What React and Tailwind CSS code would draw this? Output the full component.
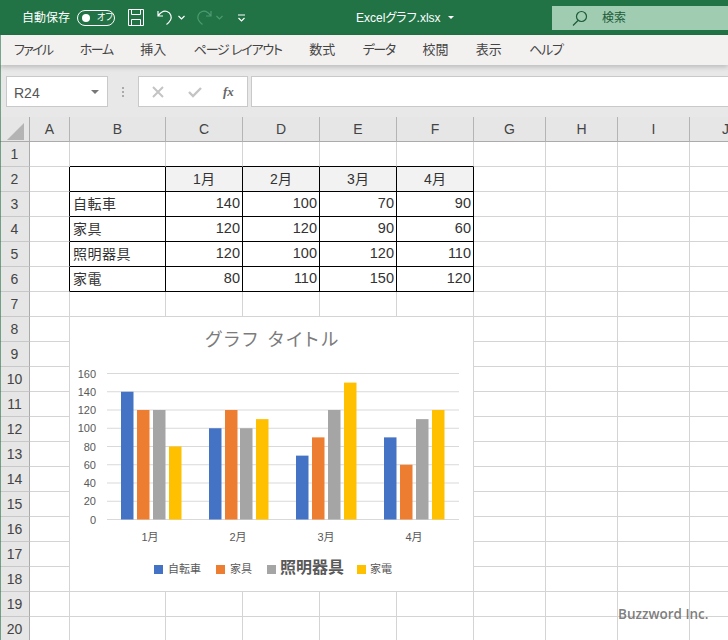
import React from "react";

const jp = "font-['Liberation_Sans','Noto_Sans_CJK_JP',sans-serif] [font-feature-settings:'palt']";

const tabs = [
  { label: "ファイル", tracking: "tracking-[-1.7px]" },
  { label: "ホーム", tracking: "tracking-[-1.3px]" },
  { label: "挿入", tracking: "tracking-normal" },
  { label: "ページ レイアウト", tracking: "tracking-[-1.2px]" },
  { label: "数式", tracking: "tracking-normal" },
  { label: "データ", tracking: "tracking-[-1.3px]" },
  { label: "校閲", tracking: "tracking-normal" },
  { label: "表示", tracking: "tracking-normal" },
  { label: "ヘルプ", tracking: "tracking-[-1.3px]" },
];
const columns = ["A", "B", "C", "D", "E", "F", "G", "H", "I", "J"];
const months = ["1月", "2月", "3月", "4月"];

const tableRows = [
  ["自転車", 140, 100, 70, 90],
  ["家具", 120, 120, 90, 60],
  ["照明器具", 120, 100, 120, 110],
  ["家電", 80, 110, 150, 120],
];

const series = [
  { name: "自転車", color: "#4472c4", xs: [121, 209, 296, 384], values: [140, 100, 70, 90] },
  { name: "家具", color: "#ed7d31", xs: [137, 225, 312, 400], values: [120, 120, 90, 60] },
  { name: "照明器具", color: "#a5a5a5", xs: [153, 240, 328, 416], values: [120, 100, 120, 110] },
  { name: "家電", color: "#ffc000", xs: [169, 256, 344, 432], values: [80, 110, 150, 120] },
];

const TitleBar = () => (
  <div className="h-[35px] bg-[#217346] flex items-center text-white relative">
    <span className={`${jp} ml-[22px] text-[12px]`}>自動保存</span>
    <div className="ml-[7px] w-[38px] h-[16px] rounded-full border border-white flex items-center pl-[4px]">
      <span className="w-[8px] h-[8px] rounded-full bg-white" />
      <span className={`${jp} ml-[7px] text-[9px] leading-none`}>オフ</span>
    </div>
    <svg className="ml-[13px]" width="16" height="17" viewBox="0 0 16 17" fill="none" stroke="#fff" strokeWidth="1">
      <path d="M.5.5h15v16H.5zM3.5.5v5h9v-5M3.5 16.5v-6h9v6" />
    </svg>
    <svg className="ml-[13px]" width="17" height="17" viewBox="0 0 17 17" fill="none" stroke="#fff" strokeWidth="1.2">
      <path d="M1 2v5h5M1.500 6.500C4 3 7 1.500 10 2.500c4 1.500 5 5.500 3.500 8.500-.8 1.500-2 3-4 4.500" />
    </svg>
    <svg className="ml-[4px]" width="7" height="5" viewBox="0 0 7 5" fill="none" stroke="#fff" strokeWidth="1.2">
      <path d="M.5 1l3 3 3-3" />
    </svg>
    <svg className="ml-[10px]" width="17" height="17" viewBox="0 0 17 17" fill="none" stroke="#4d9a70" strokeWidth="1.2">
      <path d="M16 2v5h-5M15.500 6.500C13 3 10 1.500 7 2.500 3 4 2 8 3.500 11c.8 1.500 2 3 4 4.500" />
    </svg>
    <svg className="ml-[4px]" width="7" height="5" viewBox="0 0 7 5" fill="none" stroke="#4d9a70" strokeWidth="1.2">
      <path d="M.5 1l3 3 3-3" />
    </svg>
    <svg className="ml-[14px]" width="9" height="8" viewBox="0 0 9 8" fill="none" stroke="#fff" strokeWidth="1.2">
      <path d="M1 1h7M1.500 4l3 3 3-3" />
    </svg>
    <div className={`${jp} absolute left-[356px] text-[12px] flex items-center`}>
      Excelグラフ.xlsx
      <span className="ml-[7px] w-0 h-0 border-x-[3px] border-x-transparent border-t-[3px] border-t-white" />
    </div>
    <div className="absolute left-[552px] top-[6px] w-[176px] h-[24px] bg-[#a0cdb1] flex items-center pl-[20px]">
      <svg width="16" height="16" viewBox="0 0 16 16" fill="none" stroke="#1d5b3a" strokeWidth="1.2">
        <circle cx="9.500" cy="6.500" r="5" />
        <path d="M6 10.500L1 15.500" />
      </svg>
      <span className={`${jp} ml-[14px] text-[12px] text-[#1d5b3a]`}>検索</span>
    </div>
  </div>
);

const Ribbon = () => (
  <div className={`${jp} relative h-[30px] bg-[#f3f1f0] flex items-center pl-[14px] gap-[27.4px] text-[13px] text-[#444] shadow-[0_2px_5px_rgba(0,0,0,0.2)]`}>
    {tabs.map((tab) => (
      <span key={tab.label} className={tab.tracking}>{tab.label}</span>
    ))}
  </div>
);

const FormulaBar = () => (
  <div className="h-[52px] bg-[#e8e8e8] flex items-start pt-[11px]">
    <div className="ml-[6px] w-[102px] h-[31px] bg-white border border-[#c9c9c9] flex items-center pl-[7px] pr-[8px] justify-between">
      <span className="pt-[4px] font-['Liberation_Sans',sans-serif] text-[14px] text-[#555]">R24</span>
      <span className="w-0 h-0 border-x-[4px] border-x-transparent border-t-[4px] border-t-[#777]" />
    </div>
    <div className="ml-[14px] h-[31px] flex flex-col justify-center gap-[2px]">
      <span className="w-[2px] h-[2px] bg-[#aaa]" />
      <span className="w-[2px] h-[2px] bg-[#aaa]" />
      <span className="w-[2px] h-[2px] bg-[#aaa]" />
    </div>
    <div className="ml-[14px] w-[110px] h-[31px] bg-white border border-[#c9c9c9] flex items-center">
      <svg className="ml-[13px]" width="12" height="12" viewBox="0 0 12 12" stroke="#c4c4c4" strokeWidth="2" fill="none">
        <path d="M1 1l10 10M11 1L1 11" />
      </svg>
      <svg className="ml-[24px]" width="14" height="12" viewBox="0 0 14 12" stroke="#c4c4c4" strokeWidth="2.400" fill="none">
        <path d="M1 6l4 4 8-8" />
      </svg>
      <span className="ml-[21px] font-['Liberation_Serif',serif] italic font-bold text-[13px] text-[#666]">fx</span>
    </div>
    <div className="ml-[3px] flex-1 h-[31px] bg-white border-y border-l border-[#c9c9c9]" />
  </div>
);

const SheetGrid = () => {
  const cellClass = (rowIndex, colIndex) => {
    // the table covers B2:F6, so the cells on its edge get the black lines
    const inTable = rowIndex >= 2 && rowIndex <= 6 && colIndex >= 1 && colIndex <= 5;
    const leftOfTable = rowIndex >= 2 && rowIndex <= 6 && colIndex === 0;
    const aboveTable = rowIndex === 1 && colIndex >= 1 && colIndex <= 5;
    const right = inTable || leftOfTable ? "border-r-black" : "border-r-[#d4d4d4]";
    const bottom = inTable || aboveTable ? "border-b-black" : "border-b-[#d4d4d4]";
    return `${right} ${bottom} border-r border-b`;
  };

  const cellContent = (rowIndex, colIndex) => {
    if (rowIndex === 2 && colIndex >= 2 && colIndex <= 5) {
      return <div className="h-full bg-[#f2f2f2] flex items-center justify-center">{months[colIndex - 2]}</div>;
    }
    if (rowIndex >= 3 && rowIndex <= 6) {
      const value = tableRows[rowIndex - 3][colIndex - 1];
      if (colIndex === 1) return <div className="h-full flex items-center pl-[3px] tracking-[0.5px]">{value}</div>;
      if (colIndex >= 2 && colIndex <= 5) return <div className="h-full flex items-center justify-end pr-[2px] text-[14.5px]">{value}</div>;
    }
    return null;
  };

  return (
    <div className={`${jp} relative grid grid-cols-[30px_40px_96px_77px_77px_77px_77px_72px_72px_72px_72px] auto-rows-[25px] text-[14px] text-[#333]`}>
      <div className="bg-[#e6e6e6] border-r border-b border-[#ababab] flex items-center justify-center">
        <span className="w-0 h-0 mt-[4px] ml-[2px] border-l-[17px] border-l-transparent border-b-[17px] border-b-[#b4b4b4]" />
      </div>
      {columns.map((col) => (
        <div key={col} className="bg-[#e6e6e6] border-r border-b border-r-[#b4b4b4] border-b-[#ababab] flex items-center justify-center text-[#444]">
          {col}
        </div>
      ))}
      {Array.from({ length: 20 }, (_, i) => i + 1).map((rowIndex) => (
        <React.Fragment key={rowIndex}>
          <div className="bg-[#e6e6e6] border-r border-b border-r-[#ababab] border-b-[#c8c8c8] flex items-center justify-center text-[#444]">
            {rowIndex}
          </div>
          {columns.map((col, colIndex) => (
            <div key={col} className={cellClass(rowIndex, colIndex)}>
              {cellContent(rowIndex, colIndex)}
            </div>
          ))}
        </React.Fragment>
      ))}
      <Chart />
    </div>
  );
};

const Chart = () => {
  const baseY = 519.5;
  const unit = 146 / 160;
  const legend = [
    { x: 154, tx: 168, size: 11 },
    { x: 216, tx: 230, size: 11 },
    { x: 267, tx: 280, size: 16 },
    { x: 357, tx: 370, size: 11 },
  ];
  return (
    <svg
      className={`${jp} absolute left-[70px] top-[200px] bg-white`}
      width="403"
      height="274"
      viewBox="70 317 403 274"
    >
      <text x="273" y="346" textAnchor="middle" fontSize="18" fill="#7b7b7b" letterSpacing="2.700">グラフ タイトル</text>
      {[0, 20, 40, 60, 80, 100, 120, 140, 160].map((tick) => {
        const y = baseY - tick * unit;
        return (
          <g key={tick}>
            <line x1="107" x2="459" y1={y} y2={y} stroke="#d9d9d9" strokeWidth="1" />
            <text x="96" y={y + 4} textAnchor="end" fontSize="11" fill="#595959">{tick}</text>
          </g>
        );
      })}
      {series.map((s) =>
        s.values.map((value, i) => (
          <rect key={i} x={s.xs[i]} y={baseY - value * unit} width="12.500" height={value * unit} fill={s.color} />
        ))
      )}
      {months.map((month, i) => (
        <text key={month} x={150 + i * 88} y="541" textAnchor="middle" fontSize="11" fill="#595959">{month}</text>
      ))}
      {series.map((s, i) => (
        <g key={s.name}>
          <rect x={legend[i].x} y="565" width="9" height="9" fill={s.color} />
          <text x={legend[i].tx} y="573" fontSize={legend[i].size} fontWeight={i === 2 ? 700 : 400} fill="#595959">
            {s.name}
          </text>
        </g>
      ))}
    </svg>
  );
};

export default function App() {
  return (
    <div className="relative w-[728px] h-[640px] overflow-hidden bg-white">
      <TitleBar />
      <Ribbon />
      <FormulaBar />
      <SheetGrid />
      {/* thin window edge over the left side */}
      <span className="absolute left-0 top-[35px] w-px h-[605px] bg-[#217346]/60" />
      <span className="absolute left-[618px] top-[604px] font-['Open_Sans',sans-serif] font-semibold text-[13.5px] text-[#6e6e6e]/90">
        Buzzword Inc.
      </span>
    </div>
  );
}
